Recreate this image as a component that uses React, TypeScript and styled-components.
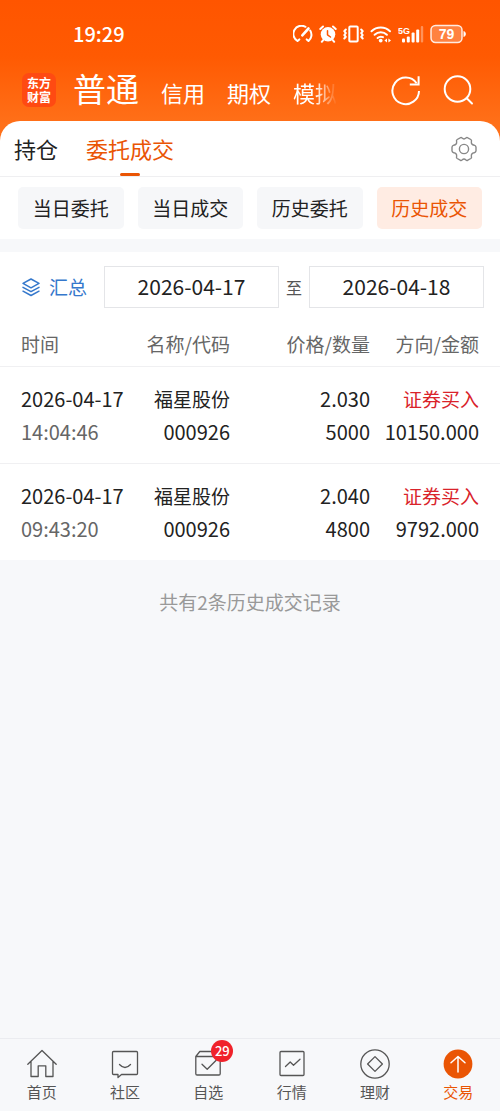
import React, { useState } from "react";
import styled, { createGlobalStyle, css } from "styled-components";

const Global = createGlobalStyle`
  *, *::before, *::after { box-sizing: border-box; }
  body {
    margin: 0;
    background: #f7f8fa;
    color: #222;
    font-family: "Noto Sans CJK SC", sans-serif;
  }
  button, input {
    font-family: inherit;
    color: inherit;
    border: 0;
    margin: 0;
    padding: 0;
    background: none;
  }
  button { cursor: pointer; }
  svg { display: block; flex: none; }
`;

const ORANGE = "#ea5504";

const Screen = styled.div`
  display: flex;
  flex-direction: column;
  min-height: 100vh;
`;

const Top = styled.header`
  background: linear-gradient(#ff5500 0, #ff5a02 56px, #ff7019 124px);
  color: #fff;
  padding-bottom: 20px;
`;

const StatusBar = styled.div`
  display: flex;
  align-items: center;
  justify-content: space-between;
  height: 68px;
  padding: 0 34px 0 73px;
`;

const Clock = styled.time`
  font-size: 20px;
  font-weight: 500;
  line-height: 24px;
`;

const StatusIcons = styled.div`
  display: flex;
  align-items: center;
  gap: 6px;
`;

const AccountBar = styled.div`
  display: flex;
  align-items: center;
  height: 53px;
  padding: 0 26px 9px 22px;
`;

const Logo = styled.a`
  width: 34px;
  height: 34px;
  padding: 3px 5px;
  border-radius: 7px;
  background: #ff4a12;
  color: #fff;
  font-size: 12px;
  font-weight: 700;
  line-height: 14px;
  text-decoration: none;
  word-break: break-all;
`;

const AccountTabs = styled.nav`
  display: flex;
  align-items: baseline;
  flex: 1;
  gap: 22px;
  margin-left: 17px;
`;

const AccountTab = styled.button<{ $active?: boolean; $faded?: boolean }>`
  font-size: ${(p) => (p.$active ? 33 : 22)}px;
  line-height: 44px;
  white-space: nowrap;
  ${(p) =>
    p.$faded &&
    css`
      mask-image: linear-gradient(90deg, #000 50%, transparent);
    `}
`;

const Actions = styled.div`
  display: flex;
  gap: 20px;
`;

const IconButton = styled.button`
  display: flex;
`;

const Sheet = styled.section`
  margin-top: -20px;
  border-radius: 20px 20px 0 0;
  background: #fff;
`;

const SectionTabs = styled.nav`
  display: flex;
  align-items: stretch;
  gap: 28px;
  height: 56px;
  padding: 0 22px 0 14px;
  border-bottom: 1px solid #efeff1;
`;

const SectionTab = styled.button<{ $active?: boolean }>`
  display: flex;
  flex-direction: column;
  align-items: center;
  justify-content: space-between;
  padding-top: 11px;
  font-size: 22px;
  line-height: 32px;
  color: ${(p) => (p.$active ? ORANGE : "#222")};
  &::after {
    content: "";
    width: 20px;
    height: 3px;
    border-radius: 2px;
    background: ${(p) => (p.$active ? ORANGE : "transparent")};
  }
`;

const Settings = styled(IconButton)`
  align-items: center;
  margin-left: auto;
`;

const Chips = styled.div`
  display: grid;
  grid-template-columns: repeat(4, 1fr);
  gap: 14px;
  padding: 10px 18px;
`;

const Chip = styled.button<{ $active?: boolean }>`
  height: 42px;
  border-radius: 5px;
  font-size: 19px;
  line-height: 28px;
  background: ${(p) => (p.$active ? "#ffece3" : "#f6f7f9")};
  color: ${(p) => (p.$active ? ORANGE : "#222")};
`;

const Records = styled.section`
  margin-top: 13px;
  background: #fff;
`;

const Filter = styled.form`
  display: flex;
  align-items: center;
  padding: 14px 16px 14px 21px;
`;

const Summary = styled.button`
  display: flex;
  align-items: center;
  gap: 8px;
  margin-right: 17px;
  font-size: 19px;
  line-height: 28px;
  color: #3578cc;
`;

const DateInput = styled.input`
  flex: 1;
  min-width: 0;
  height: 42px;
  padding-bottom: 2px;
  border: 1px solid #e4e5e8;
  font-size: 21px;
  text-align: center;
`;

const To = styled.span`
  width: 30px;
  font-size: 16px;
  text-align: center;
  color: #555;
`;

const Table = styled.table`
  width: 100%;
  border-collapse: collapse;
  table-layout: fixed;
`;

const Col = styled.col<{ $w: number }>`
  width: ${(p) => p.$w}%;
`;

const Head = styled.th`
  height: 44px;
  padding: 0;
  font-size: 19px;
  font-weight: 400;
  line-height: 28px;
  text-align: right;
  white-space: nowrap;
  color: #666;
  &:first-child { padding-left: 21px; text-align: left; }
  &:last-child { padding-right: 21px; }
`;

const Cell = styled.td`
  padding: 15px 0;
  border-top: 1px solid #f0f0f2;
  text-align: right;
  white-space: nowrap;
  &:first-child { padding-left: 21px; text-align: left; }
  &:last-child { padding-right: 21px; }
`;

const Line = styled.div<{ $tone?: "muted" | "buy"; $cjk?: boolean }>`
  font-size: ${(p) => (p.$cjk ? 19 : 20)}px;
  line-height: 33px;
  color: ${(p) =>
    p.$tone === "muted" ? "#666" : p.$tone === "buy" ? "#d9232b" : "#222"};
`;

const Total = styled.p`
  flex: 1;
  margin: 0;
  padding: 28px 0;
  font-size: 19px;
  line-height: 28px;
  text-align: center;
  color: #999;
`;

const BottomNav = styled.nav`
  display: grid;
  grid-template-columns: repeat(6, 1fr);
  height: 73px;
  padding-top: 9px;
  border-top: 1px solid #ebecf0;
`;

const NavLink = styled.a<{ $active?: boolean }>`
  display: flex;
  flex-direction: column;
  align-items: center;
  font-size: 15px;
  line-height: 24px;
  text-decoration: none;
  color: ${(p) => (p.$active ? ORANGE : "#555")};
`;

const NavIcon = styled.span`
  position: relative;
`;

const Badge = styled.span`
  position: absolute;
  top: -8px;
  right: -9px;
  width: 22px;
  height: 22px;
  border-radius: 50%;
  background: #f0222a;
  color: #fff;
  font-size: 13px;
  font-weight: 500;
  line-height: 22px;
  text-align: center;
`;

const stroke = {
  fill: "none",
  stroke: "currentColor",
  strokeLinecap: "round" as const,
  strokeLinejoin: "round" as const,
};

const Gauge = () => (
  <svg width="20" height="18" viewBox="0 0 20 18" {...stroke} strokeWidth="2">
    <path d="M4.5 16A8 8 0 0 1 12.5 1.8M17.2 5.5A8 8 0 0 1 15.5 16M4.5 16l1.8-1.6M15.5 16l-1.8-1.6" />
    <path d="M15.5 3.5 9.3 10.3" strokeWidth="2.6" />
  </svg>
);

const Alarm = () => (
  <svg width="18" height="18" viewBox="0 0 18 18" {...stroke} strokeWidth="2">
    <circle cx="9" cy="9.3" r="7.3" fill="currentColor" stroke="none" />
    <path d="M1.3 4 4 1.5M16.7 4 14 1.5M4 15.3 2.8 16.8M14 15.3l1.2 1.5" />
    <path d="M8.5 5.8v4l3 2.2" stroke="#ff5602" strokeWidth="1.5" />
  </svg>
);

const Vibrate = () => (
  <svg width="21" height="18" viewBox="0 0 21 18" {...stroke} strokeWidth="2">
    <rect x="6.3" y="1.5" width="8.4" height="15" rx="1" />
    <path d="M2.8 4.5 1.3 6.2l1.5 1.9L1.300 10l1.500 1.800-1.500 1.700M18.200 4.500l1.500 1.700-1.500 1.900 1.500 1.900-1.500 1.800 1.500 1.700" strokeWidth="2" />
  </svg>
);

const Wifi = () => (
  <svg width="22" height="18" viewBox="0 0 22 18" {...stroke} strokeWidth="2">
    <path d="M1.5 6.300a13.400 13.400 0 0 1 18.500 0M4.600 9.800a9 9 0 0 1 12.300 0M7.600 13a5 5 0 0 1 5.400-.8" />
    <circle cx="10.700" cy="15.600" r="1.900" fill="currentColor" stroke="none" />
    <path d="m17 13.600-2.600 1.900 2.600 1.900zM18.400 13.600l2.600 1.900-2.600 1.900z" fill="currentColor" stroke="none" />
  </svg>
);

const Signal = () => (
  <svg width="26" height="18" viewBox="0 0 26 18" fill="currentColor">
    <text x="0" y="9" fontSize="9" fontWeight="700" fontFamily="Liberation Sans, sans-serif">5G</text>
    <rect x="4" y="13.5" width="3" height="4" rx="1" />
    <rect x="8.800" y="11.500" width="3" height="6" rx="1" />
    <rect x="13.600" y="7.500" width="3" height="10" rx="1" />
    <rect x="18.200" y="4.500" width="3" height="13" rx="1" />
    <rect x="22.800" y="1" width="2.400" height="16.500" rx="1" opacity=".35" />
  </svg>
);

const Battery = () => (
  <svg width="36" height="20" viewBox="0 0 36 20" fill="currentColor">
    <rect x="1" y="1.5" width="31" height="17" rx="4.5" fill="#ffffff40" stroke="#ffffffdd" strokeWidth="1.5" />
    <path d="M34 7.5a3 3 0 0 1 0 5z" stroke="currentColor" strokeWidth="1" />
    <text x="16.5" y="15" fontSize="14" fontWeight="700" textAnchor="middle" fontFamily="Liberation Sans, sans-serif">79</text>
  </svg>
);

const Refresh = () => (
  <svg width="32" height="32" viewBox="0 0 32 32" {...stroke} strokeWidth="2" strokeLinecap="butt" strokeLinejoin="miter">
    <path d="M29 17A13.300 13.300 0 1 1 26.600 9.200" />
    <path d="M28.600 2.200v8.400h-8.800" />
  </svg>
);

const Search = () => (
  <svg width="32" height="32" viewBox="0 0 32 32" {...stroke} strokeWidth="2">
    <circle cx="15.5" cy="15" r="12.8" />
    <path d="m25 24.5 5 5" />
  </svg>
);

const Gear = () => (
  <svg width="28" height="28" viewBox="0 0 28 28" {...stroke} stroke="#888" strokeWidth="1.4">
    <path d="M10.2 2.8Q11.2 2 12.1 3.1Q14 5 15.9 3.1Q16.8 2 17.8 2.8L20.8 4.5Q21.9 5.2 21.4 6.5Q20.9 9.7 24.2 10.2Q25.8 10.7 26 12.1V15.9Q25.8 17.3 24.2 17.8Q20.9 18.3 21.4 21.5Q21.9 22.8 20.8 23.5L17.8 25.2Q16.8 26 15.9 24.9Q14 23 12.1 24.9Q11.2 26 10.2 25.2L7.2 23.5Q6.1 22.8 6.6 21.5Q7.1 18.3 3.8 17.8Q2.2 17.3 2 15.9V12.1Q2.2 10.7 3.8 10.2Q7.1 9.7 6.6 6.5Q6.1 5.2 7.2 4.5Z" />
    <circle cx="14" cy="14" r="4.6" />
  </svg>
);

const Layers = () => (
  <svg width="20" height="20" viewBox="0 0 20 20" {...stroke} strokeWidth="1.5">
    <path d="M10 2 18 6.4 10 10.8 2 6.4z" />
    <path d="m2 10.4 8 4.3 8-4.3M2 14.2l8 4.3 8-4.3" />
  </svg>
);

const navStroke = { ...stroke, strokeWidth: 1.3, width: 32, height: 32, viewBox: "0 0 32 32" };

const Home = () => (
  <svg {...navStroke}>
    <path d="M1.8 16.2 16 2.5l14.2 13.7M5 13.5v15h7.2V17.8h7.6v10.7H27v-15" />
  </svg>
);

const Community = () => (
  <svg {...navStroke}>
    <path d="M4.5 3.5h23q1 0 1 1v21q0 1-1 1H12.5L9 29.5v-3H4.5q-1 0-1-1v-21q0-1 1-1z" />
    <path d="M10.5 16.5q5.5 6 11 0" />
  </svg>
);

const Watchlist = () => (
  <svg {...navStroke}>
    <path d="M3.8 8.5h24.4v17.2q0 1.3-1.3 1.3H5.1q-1.3 0-1.3-1.3zl4-5h16.400l4 5" />
    <path d="m10 16.2 5.2 5.1 9-9" />
  </svg>
);

const Market = () => (
  <svg {...navStroke}>
    <rect x="4" y="3.5" width="24" height="24" rx="1" />
    <path d="m9.5 18.5 4.7-4.5 3.3 3.2 6.5-6" />
  </svg>
);

const Wealth = () => (
  <svg {...navStroke}>
    <circle cx="16" cy="16" r="14.2" />
    <path d="m16 8.6 7.4 7.4-7.4 7.4L8.6 16z" />
  </svg>
);

const Trade = () => (
  <svg {...navStroke}>
    <circle cx="16" cy="16" r="14.4" fill="currentColor" stroke="none" />
    <path d="M16 24V8.5M9 14.8l7-6.3 7 6.3" stroke="#fff" strokeWidth="1.5" />
  </svg>
);

const sections = ["持仓", "委托成交"];
const chips = ["当日委托", "当日成交", "历史委托", "历史成交"];

const trades = [
  { date: "2026-04-17", time: "14:04:46", name: "福星股份", code: "000926", price: "2.030", count: "5000", side: "证券买入", amount: "10150.000" },
  { date: "2026-04-17", time: "09:43:20", name: "福星股份", code: "000926", price: "2.040", count: "4800", side: "证券买入", amount: "9792.000" },
];

const navItems = [
  { label: "首页", icon: <Home /> },
  { label: "社区", icon: <Community /> },
  { label: "自选", icon: <Watchlist />, badge: 29 },
  { label: "行情", icon: <Market /> },
  { label: "理财", icon: <Wealth /> },
  { label: "交易", icon: <Trade />, active: true },
];

export default function App() {
  const [section, setSection] = useState("委托成交");
  const [chip, setChip] = useState("历史成交");
  const [from, setFrom] = useState("2026-04-17");
  const [to, setTo] = useState("2026-04-18");

  return (
    <Screen>
      <Global />
      <Top>
        <StatusBar>
          <Clock>19:29</Clock>
          <StatusIcons>
            <Gauge />
            <Alarm />
            <Vibrate />
            <Wifi />
            <Signal />
            <Battery />
          </StatusIcons>
        </StatusBar>
        <AccountBar>
          <Logo href="#">东方财富</Logo>
          <AccountTabs>
            <AccountTab $active>普通</AccountTab>
            <AccountTab>信用</AccountTab>
            <AccountTab>期权</AccountTab>
            <AccountTab $faded>模拟</AccountTab>
          </AccountTabs>
          <Actions>
            <IconButton aria-label="刷新"><Refresh /></IconButton>
            <IconButton aria-label="搜索"><Search /></IconButton>
          </Actions>
        </AccountBar>
      </Top>

      <Sheet>
        <SectionTabs>
          {sections.map((s) => (
            <SectionTab key={s} $active={s === section} onClick={() => setSection(s)}>
              {s}
            </SectionTab>
          ))}
          <Settings aria-label="设置"><Gear /></Settings>
        </SectionTabs>
        <Chips>
          {chips.map((c) => (
            <Chip key={c} $active={c === chip} onClick={() => setChip(c)}>
              {c}
            </Chip>
          ))}
        </Chips>
      </Sheet>

      <Records>
        <Filter onSubmit={(e) => e.preventDefault()}>
          <Summary type="button"><Layers />汇总</Summary>
          <DateInput aria-label="开始日期" value={from} onChange={(e) => setFrom(e.target.value)} />
          <To>至</To>
          <DateInput aria-label="结束日期" value={to} onChange={(e) => setTo(e.target.value)} />
        </Filter>
        <Table>
          <colgroup>
            <Col $w={27} />
            <Col $w={19} />
            <Col $w={28} />
            <Col $w={26} />
          </colgroup>
          <thead>
            <tr>
              <Head scope="col">时间</Head>
              <Head scope="col">名称/代码</Head>
              <Head scope="col">价格/数量</Head>
              <Head scope="col">方向/金额</Head>
            </tr>
          </thead>
          <tbody>
            {trades.map((t) => (
              <tr key={t.time}>
                <Cell>
                  <Line>{t.date}</Line>
                  <Line $tone="muted">{t.time}</Line>
                </Cell>
                <Cell>
                  <Line $cjk>{t.name}</Line>
                  <Line>{t.code}</Line>
                </Cell>
                <Cell>
                  <Line>{t.price}</Line>
                  <Line>{t.count}</Line>
                </Cell>
                <Cell>
                  <Line $cjk $tone="buy">{t.side}</Line>
                  <Line>{t.amount}</Line>
                </Cell>
              </tr>
            ))}
          </tbody>
        </Table>
      </Records>

      <Total>共有2条历史成交记录</Total>

      <BottomNav>
        {navItems.map((n) => (
          <NavLink key={n.label} href="#" $active={n.active}>
            <NavIcon>
              {n.icon}
              {n.badge && <Badge>{n.badge}</Badge>}
            </NavIcon>
            {n.label}
          </NavLink>
        ))}
      </BottomNav>
    </Screen>
  );
}
